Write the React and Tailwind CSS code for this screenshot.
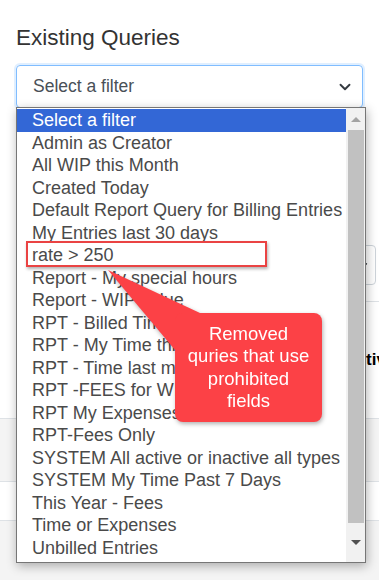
import { ChevronDown } from 'lucide-react';

const queries = [
    'Select a filter',
    'Admin as Creator',
    'All WIP this Month',
    'Created Today',
    'Default Report Query for Billing Entries',
    'My Entries last 30 days',
    'rate > 250',
    'Report - My special hours',
    'Report - WIP value',
    'RPT - Billed Time this Month',
    'RPT - My Time this Week',
    'RPT - Time last month',
    'RPT -FEES for WIP',
    'RPT My Expenses',
    'RPT-Fees Only',
    'SYSTEM All active or inactive all types',
    'SYSTEM My Time Past 7 Days',
    'This Year - Fees',
    'Time or Expenses',
    'Unbilled Entries',
];

const App = () => {
    return (
        <div className="relative w-[379px] h-[580px] overflow-hidden bg-white font-['Liberation_Sans',Arial,sans-serif]">
            {/* Page behind the open dropdown */}
            <div className="pt-[24px]">
                <h2 className="px-4 text-[22.5px] leading-[28px] text-[#333]">Existing Queries</h2>
                <div className="mx-4 mt-[13px] h-[43px] flex items-center pl-4 pr-2 border border-[#80bdff] rounded-[4px] shadow-[0_0_0_2px_rgba(0,123,255,0.12)] text-[17.5px] text-[#495057]">
                    <span className="flex-1">Select a filter</span>
                    <ChevronDown size={18} strokeWidth={2.5} className="text-[#343a40]" />
                </div>

                <div className="ml-[200px] mt-[137px] w-[176px] h-[40px] flex items-center justify-end pr-[6px] border border-[#ced4da] rounded-[4px]">
                    <ChevronDown size={10} strokeWidth={3} className="text-[#343a40]" />
                </div>
                <div className="ml-[200px] mt-[16px] border-b border-[#dee2e6]"></div>

                <div className="h-[116px] flex items-center pl-[332px] text-[17px] font-bold text-black whitespace-nowrap">
                    Inactive
                </div>

                <div className="border-t border-[#dee2e6] bg-[#f4f4f4] h-[63px]"></div>
                <div className="border-t border-[#dee2e6] bg-white h-[39px]"></div>
                <div className="border-t border-[#dee2e6] bg-[#f4f4f4] h-[80px]"></div>
            </div>

            {/* Open dropdown list */}
            <div className="absolute left-[16px] top-[107px] w-[350px] h-[456px] flex bg-white border border-[#767676] shadow-[1px_3px_10px_rgba(0,0,0,0.3)]">
                <ul className="flex-1 pt-[1px]">
                    {queries.map((q, i) => (
                        <li
                            key={q}
                            className={`h-[22.5px] pl-[15px] text-[18px] leading-[22.5px] whitespace-nowrap overflow-hidden ${i === 0 ? 'bg-[#3367d6] text-white' : 'text-[#4a4a4a]'}`}
                        >
                            {q}
                        </li>
                    ))}
                </ul>
                <div className="w-[19px] flex flex-col items-center bg-[#f1f1f1]">
                    <div className="h-[22px] flex items-center">
                        <div className="w-0 h-0 border-x-[5px] border-x-transparent border-b-[5px] border-b-[#a3a3a3]"></div>
                    </div>
                    <div className="w-[16px] h-[393px] bg-[#c1c1c1]"></div>
                    <div className="flex-1 flex items-center">
                        <div className="w-0 h-0 border-x-[5px] border-x-transparent border-t-[5px] border-t-[#505050]"></div>
                    </div>
                </div>
            </div>

            {/* Highlight around the removed query */}
            <div className="absolute left-[26px] top-[241px] w-[241px] h-[26px] border-2 border-[#ea4343] shadow-[1px_2px_3px_rgba(0,0,0,0.3)]"></div>

            {/* Callout */}
            <div className="absolute left-[100px] top-[260px] w-[230px] h-[170px] drop-shadow-[1px_2px_2px_rgba(0,0,0,0.3)]">
                <svg className="absolute left-0 top-0" width="230" height="170" viewBox="0 0 230 170">
                    <polygon points="8,10 100,53 75,90" fill="#fc4146" />
                </svg>
                <div className="absolute left-[75px] top-[53px] w-[147px] h-[109px] flex items-center justify-center rounded-[8px] bg-[#fc4146] text-white text-center text-[18.5px] leading-[22.5px]">
                    <p>Removed<br />quries that use<br />prohibited<br />fields</p>
                </div>
            </div>
        </div>
    );
};

export default App;
